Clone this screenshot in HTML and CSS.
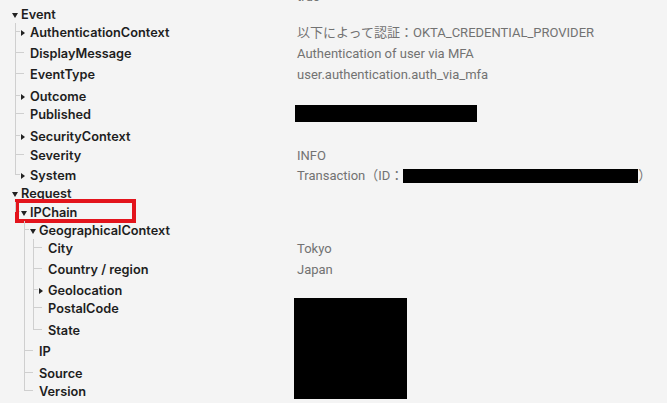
FILE: index.html
```html
<!DOCTYPE html>
<html lang="ja">
<head>
<meta charset="utf-8">
<link rel="stylesheet" href="styles.css">
</head>
<body>
<div class="tree">
  <div class="node">
    <div class="row"><span class="tog"></span><span class="name"></span><span class="value">true</span></div>
  </div>
  <div class="node">
    <div class="row"><span class="tog"><i class="down"></i></span><span class="name">Event</span><span class="value"></span></div>
    <div class="kids">
      <div class="node"><div class="row has"><span class="tog"><i class="right"></i></span><span class="name">AuthenticationContext</span><span class="value">以下によって認証：OKTA_CREDENTIAL_PROVIDER</span></div></div>
      <div class="node"><div class="row p3"><span class="tog"></span><span class="name">DisplayMessage</span><span class="value">Authentication of user via MFA</span></div></div>
      <div class="node"><div class="row p3"><span class="tog"></span><span class="name">EventType</span><span class="value">user.authentication.auth_via_mfa</span></div></div>
      <div class="node"><div class="row has p4"><span class="tog"><i class="right"></i></span><span class="name">Outcome</span><span class="value"></span></div></div>
      <div class="node"><div class="row"><span class="tog"></span><span class="name">Published</span><span class="value"><b class="redact pub"></b></span></div></div>
      <div class="node"><div class="row has p4"><span class="tog"><i class="right"></i></span><span class="name">SecurityContext</span><span class="value"></span></div></div>
      <div class="node"><div class="row p1"><span class="tog"></span><span class="name">Severity</span><span class="value">INFO</span></div></div>
      <div class="node"><div class="row has p2"><span class="tog"><i class="right"></i></span><span class="name">System</span><span class="value">Transaction（ID：<b class="redact tx"></b>）</span></div></div>
    </div>
  </div>
  <div class="node">
    <div class="row"><span class="tog"><i class="down"></i></span><span class="name">Request</span><span class="value"></span></div>
    <div class="kids">
      <div class="node">
        <div class="row has p1"><span class="tog"><i class="down"></i></span><span class="name">IPChain</span><span class="value"></span><span class="mark"></span></div>
        <div class="kids">
          <div class="node">
            <div class="row has"><span class="tog"><i class="down"></i></span><span class="name">GeographicalContext</span><span class="value"></span></div>
            <div class="kids">
              <div class="node"><div class="row"><span class="tog"></span><span class="name">City</span><span class="value">Tokyo</span></div></div>
              <div class="node"><div class="row p3"><span class="tog"></span><span class="name">Country / region</span><span class="value">Japan</span></div></div>
              <div class="node"><div class="row has p3"><span class="tog"><i class="right"></i></span><span class="name">Geolocation</span><span class="value"></span></div></div>
              <div class="node"><div class="row"><span class="tog"></span><span class="name">PostalCode</span><span class="value"><b class="redact big"></b></span></div></div>
              <div class="node"><div class="row p4"><span class="tog"></span><span class="name">State</span><span class="value"></span></div></div>
            </div>
          </div>
          <div class="node"><div class="row p3"><span class="tog"></span><span class="name">IP</span><span class="value"></span></div></div>
          <div class="node"><div class="row p4"><span class="tog"></span><span class="name">Source</span><span class="value"></span></div></div>
          <div class="node"><div class="row"><span class="tog"></span><span class="name">Version</span><span class="value"></span></div></div>
        </div>
      </div>
    </div>
  </div>
</div>
</body>
</html>
```

FILE: styles.css
```css
html, body {
  margin: 0;
  padding: 0;
  background: #f4f4f4;
  overflow: hidden;
}
body {
  width: 667px;
  height: 403px;
}
.tree {
  margin-top: -12px;
  padding-left: 10px;
}
.node {
  position: relative;
}
.row {
  position: relative;
  display: flex;
  align-items: center;
  height: 18px;
  line-height: 18px;
}
.row.p1 { padding-top: 1px; }
.row.p2 { padding-top: 2px; }
.row.p3 { padding-top: 3px; }
.row.p4 { padding-top: 4px; }
.tog {
  flex: 0 0 9px;
  height: 18px;
  display: flex;
  align-items: center;
  justify-content: center;
  margin-right: 2px;
}
.down {
  display: block;
  width: 0;
  height: 0;
  border-left: 3px solid transparent;
  border-right: 3px solid transparent;
  border-top: 5px solid #222;
  margin-top: 0;
}
.right {
  display: block;
  width: 0;
  height: 0;
  border-top: 3px solid transparent;
  border-bottom: 3px solid transparent;
  border-left: 4px solid #222;
  margin-left: -1px;
  margin-top: -1px;
}
.name {
  flex: 1 1 auto;
  font-family: Inter, "Liberation Sans", sans-serif;
  font-weight: 600;
  font-size: 12.75px;
  color: #1e1e1e;
  white-space: nowrap;
}
.value {
  position: relative;
  flex: 0 0 370px;
  display: flex;
  align-items: center;
  height: 18px;
  font-family: Roboto, "Noto Sans CJK JP", sans-serif;
  font-size: 13px;
  color: #727272;
  white-space: nowrap;
}
.kids {
  margin-left: 9px;
}
.kids > .node::before {
  content: "";
  position: absolute;
  left: -4px;
  top: -1px;
  bottom: 0;
  border-left: 1px solid #cfcfcf;
}
.kids > .node:last-child::before {
  display: none;
}
.kids > .node:last-child > .row::after {
  content: "";
  position: absolute;
  left: -4px;
  top: -1px;
  bottom: 10px;
  border-left: 1px solid #cfcfcf;
}
.kids > .node > .row::before {
  content: "";
  position: absolute;
  left: -4px;
  bottom: 10px;
  width: 9px;
  border-top: 1px solid #cfcfcf;
}
.kids > .node > .row.has::before {
  width: 5px;
}
.redact {
  display: block;
  background: #000;
}
.redact.pub {
  width: 182px;
  height: 17px;
  margin-left: -2px;
  margin-bottom: 4px;
}
.redact.tx {
  width: 235px;
  height: 14px;
  margin-left: 0;
  margin-bottom: 1px;
}
.redact.big {
  position: absolute;
  left: -3px;
  top: -2px;
  width: 113px;
  height: 101px;
}
.mark {
  position: absolute;
  left: -4px;
  top: -4px;
  width: 121px;
  height: 24px;
  box-sizing: border-box;
  border: 4px solid #e3141c;
  pointer-events: none;
}
```
